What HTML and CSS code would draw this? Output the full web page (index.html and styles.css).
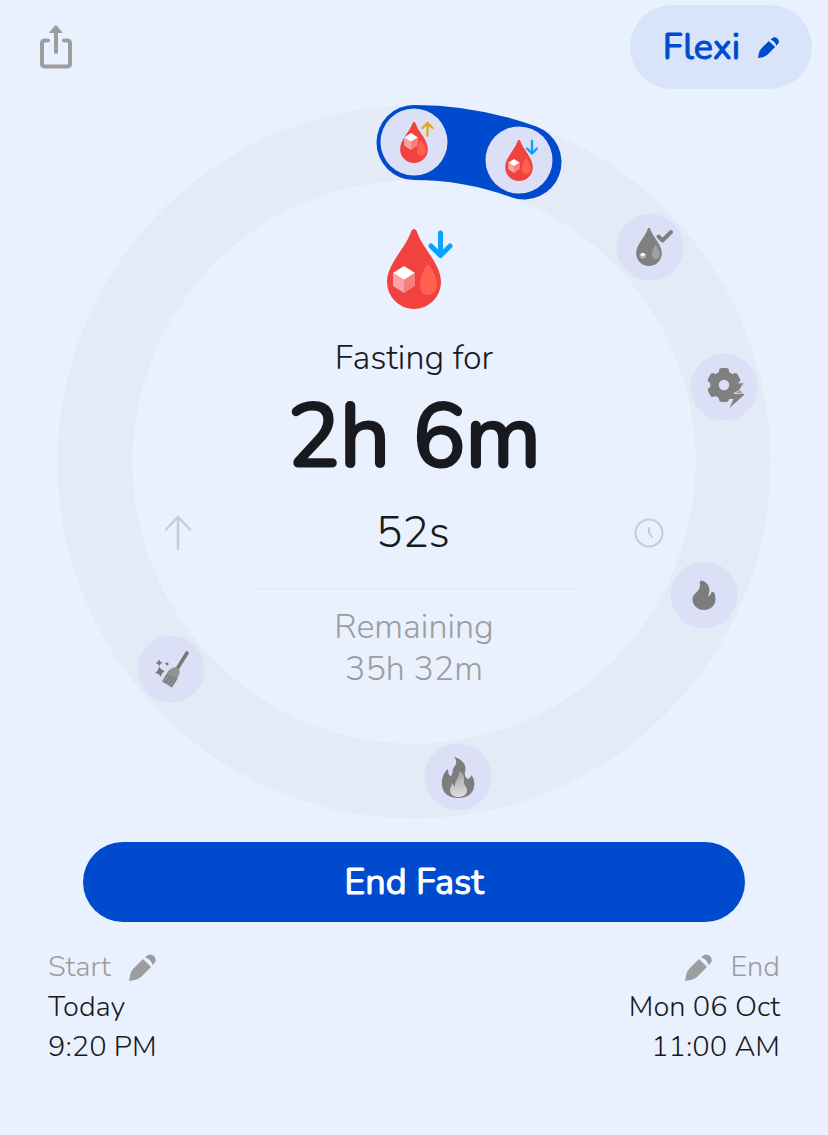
FILE: index.html
```html
<!DOCTYPE html>
<html lang="en">
<head>
<meta charset="utf-8">
<meta name="viewport" content="width=device-width, initial-scale=1">
<title>Fasting timer</title>
<link rel="stylesheet" href="styles.css">
</head>
<body>
<svg class="defs" aria-hidden="true">
  <symbol id="drop" viewBox="0 0 54 80">
    <path fill="var(--drop)" d="M27 0C28.500 0 29.300 1 30 3C36 20 54 35 54 53A27 27 0 0 1 0 53C0 35 18 20 24 3C24.700 1 25.500 0 27 0Z"/>
    <path fill="var(--shine)" d="M41 35C44 38 50 48 50 55C50 62 46 66 41 66C36 66 33 62 33 57C33 49 37 39 41 35Z"/>
  </symbol>
  <symbol id="cube" viewBox="0 0 22 27">
    <path fill="#fff" d="M11 0L22 7L11 14L0 7Z"/>
    <path fill="#f9a3a3" d="M0 7L11 14V27L0 20Z"/>
    <path fill="#f77f7d" d="M22 7L11 14V27L22 20Z"/>
  </symbol>
  <symbol id="pencil" viewBox="0 0 27 27">
    <path fill="currentColor" d="M0 27L1 21.500Q2 17 4.500 14.500L14 5L22 13L12.500 22.500Q9 25.500 6 26Z"/>
    <path fill="currentColor" d="M16 3.500L18.500 1.300Q21.500-.7 25 2Q28 5.500 26 8.500L23.500 11.200Q23 8.500 21 6.300Q18.500 4 16 3.500Z"/>
  </symbol>
</svg>

<main class="screen">
  <header class="topbar">
    <button class="icon-button share" type="button" aria-label="Share">
      <svg width="32" height="44" viewBox="0 0 32 44" fill="none" stroke="currentColor" stroke-width="4" stroke-linecap="round" stroke-linejoin="round">
        <path d="M8 15.500H5Q2 15.500 2 18.500V38.500Q2 41.500 5 41.500H27Q30 41.500 30 38.500V18.500Q30 15.500 27 15.500H24M16 27V6"/>
        <path fill="currentColor" stroke-width="1" d="M16 .5L22 7.500H10Z"/>
      </svg>
    </button>
    <button class="plan" type="button">Flexi <svg width="21" height="21" aria-hidden="true"><use href="#pencil"/></svg></button>
  </header>

  <section class="dial">
    <svg class="ring" viewBox="-357 -357 714 714" aria-hidden="true">
      <circle class="track" r="319"/>
      <path class="progress" d="M0-319.500A319.500 319.500 0 0 1 110-300"/>

      <g transform="translate(0 -320)">
        <circle class="badge on" r="33.500"/>
        <use href="#drop" x="-14" y="-20" width="28" height="41"/>
        <use href="#cube" x="-10" y="-9" width="14" height="17"/>
        <path class="tick up" d="M13.500-6.500V-19M8.500-14L13.500-19L18.500-14"/>
      </g>
      <g transform="translate(105 -302)">
        <circle class="badge on" r="33.500"/>
        <use href="#drop" x="-14" y="-20" width="28" height="41"/>
        <use href="#cube" x="-11" y="-1" width="12" height="14"/>
        <path class="tick down" d="M13-19V-6.500M8-11.500L13-6.500L18-11.500"/>
      </g>
      <g class="muted" transform="translate(236 -215)">
        <circle class="badge" r="33.500"/>
        <use href="#drop" x="-14" y="-19" width="26" height="38"/>
        <path fill="#fff" d="M-7.500 5.500L-4 7.500L-7 9.500L-10.500 8Z"/>
        <path fill="#b5b5b5" d="M-10.500 8L-7 9.500L-4 7.500V10L-7.500 12L-10.500 10Z"/>
        <path class="check" d="M8.500-10.500L12.500-6.500L21-15"/>
      </g>
      <g transform="translate(310 -75)">
        <circle class="badge" r="33.500"/>
        <g transform="translate(0 -2)" fill="#808080">
          <circle r="9.500" fill="none" stroke="#808080" stroke-width="8.500"/>
          <g fill="none" stroke="#808080" stroke-width="5" stroke-linejoin="round">
            <path id="tooth" d="M-3-11L-2.500-14.500H2.500L3-11Z"/>
            <use href="#tooth" transform="rotate(60)"/>
            <use href="#tooth" transform="rotate(120)"/>
            <use href="#tooth" transform="rotate(180)"/>
            <use href="#tooth" transform="rotate(240)"/>
            <use href="#tooth" transform="rotate(300)"/>
          </g>
          <path d="M13-1.500L20.500-2L15.500 5.500L20.500 9.500L5.500 23L9.500 14H4.500L8 6Z"/>
          <path d="M19.500-2L15.500 5.500L10 8.500L20.500 8" fill="none" stroke="#dce0f7" stroke-width="1"/>
        </g>
      </g>
      <g transform="translate(290 133)">
        <circle class="badge" r="33.500"/>
        <path fill="#7c7c7c" d="M-3-14.500C3-14 8-7 4 1C6 1 7-1 7.500-3C10-4 11.500 0 11.500 4C11.500 11 6 15 0 15C-7 15-11.500 10-11.500 4C-11.500-2-5-2-4-9C-3.800-11-5-13-3-14.500Z"/>
      </g>
      <g transform="translate(44 315)">
        <circle class="badge" r="33.500"/>
        <path fill="#7d7d7d" d="M-4-20C5-18 9-11 7-5C6-1 9 2 10 2C12 1 13 0 13-2C16 1 17 5 16 10C15 18 7 21 0 21C-8 21-15 17-16 9C-17 2-14-5-10-8C-10-4-9-1-7-1C-5-3-6-7-4-10C-1-13-1-17-4-20Z"/>
        <path fill="url(#glow)" d="M1-6C7-3 6 1 6 5C6 9 9 9 9 13C9 18 5 20 0 20C-5 20-8 17-8 13C-8 10-6 9-6 6L-3 10C-4 4 2 1 1-6Z"/>
      </g>
      <g transform="translate(-243 207)">
        <circle class="badge" r="33.500"/>
        <path stroke="#777" stroke-width="3.600" stroke-linecap="round" d="M16-16L6 0"/>
        <path fill="#929292" d="M2-1Q4-3 8 0Q10 4 6 9L-4 4Q-2 0 2-1Z"/>
        <path fill="#808080" d="M-4 4L7 9L1 18.500L-9 12.500Z"/>
        <path stroke="#a9a9a9" stroke-width=".7" d="M-2 6L-7 13M1 7L-4 15M4 9L-1 17"/>
        <path fill="#777" d="M-12-3Q-10.500 1-6 2Q-9.500 3.500-10 8Q-12.500 4-16 4Q-12.500 2-12-3Z"/>
        <path fill="#777" d="M-12-9.500Q-11-7-8.500-6.500Q-11-5.500-11.500-3Q-13-5.500-15.500-6Q-12.500-7-12-9.500ZM-4-7.500L-3-5.500L-1.500-5L-3.500-4L-4-2.500L-5-4.500L-6.500-5.500L-4.500-6Z"/>
      </g>
      <defs>
        <linearGradient id="glow" x1="0" y1="0" x2="0" y2="1">
          <stop offset="0" stop-color="#a4a4a4"/>
          <stop offset="1" stop-color="#dedede"/>
        </linearGradient>
      </defs>
    </svg>

    <div class="readout">
      <svg class="stage" width="54" height="80" viewBox="0 0 54 80" aria-hidden="true">
        <use href="#drop" width="54" height="80"/>
        <use href="#cube" x="6" y="37" width="22" height="27"/>
        <path class="tick down large" d="M53.500 4V26M44 17L53.500 26.500L63 17"/>
      </svg>
      <p class="label">Fasting for</p>
      <h1 class="elapsed">2h 6m</h1>
      <div class="seconds-row">
        <button class="icon-button faint" type="button" aria-label="Count up">
          <svg width="28" height="36" viewBox="0 0 28 36" fill="none" stroke="currentColor" stroke-width="2.500" stroke-linecap="round" stroke-linejoin="round"><path d="M14 34V2M2 14.500L14 2L26 14.500"/></svg>
        </button>
        <p class="seconds">52s</p>
        <button class="icon-button faint" type="button" aria-label="History">
          <svg width="30" height="30" viewBox="0 0 30 30" fill="none" stroke="currentColor" stroke-width="2" stroke-linecap="round" stroke-linejoin="round"><circle cx="15" cy="15" r="13.500"/><path d="M15 10V15L18 19"/></svg>
        </button>
      </div>
      <hr class="divider">
      <p class="remaining">Remaining<br>35h 32m</p>
    </div>
  </section>

  <button class="end-fast" type="button">End Fast</button>

  <footer class="times">
    <div class="time">
      <button class="edit" type="button">Start <svg width="27" height="27" aria-hidden="true"><use href="#pencil"/></svg></button>
      <p>Today<br>9:20 PM</p>
    </div>
    <div class="time end">
      <button class="edit" type="button"><svg width="27" height="27" aria-hidden="true"><use href="#pencil"/></svg> End</button>
      <p>Mon 06 Oct<br>11:00 AM</p>
    </div>
  </footer>
</main>
</body>
</html>
```
FILE: styles.css
```css
* {
  box-sizing: border-box;
}

:root {
  --blue: #004acd;
  --ink: #191a20;
  --grey: #9d9d9f;
  --drop: #f2423f;
  --shine: #ff6150;
}

body {
  margin: 0;
  background: #eaf1fe;
  color: var(--ink);
  font-family: Nunito, "Open Sans", sans-serif;
  font-weight: 300;
}

p,
h1 {
  margin: 0;
}

button {
  padding: 0;
  border: 0;
  background: none;
  color: inherit;
  font: inherit;
  cursor: pointer;
}

svg {
  display: block;
}

.defs {
  position: absolute;
  width: 0;
  height: 0;
}

.screen {
  display: flex;
  flex-direction: column;
  align-items: center;
  min-height: 100vh;
  padding-bottom: 48px;
}

.topbar {
  display: flex;
  align-items: center;
  justify-content: space-between;
  align-self: stretch;
  padding: 5px 16px 16px 40px;
}

.share {
  color: #9d9d9d;
}

.plan {
  display: flex;
  align-items: center;
  gap: 18px;
  height: 84px;
  padding: 0 33px;
  border-radius: 42px;
  background: #d8e4fa;
  color: var(--blue);
  font-size: 36px;
  font-weight: 400;
  -webkit-text-stroke: 1px currentColor;
}

.dial {
  display: grid;
  width: 87%;
  max-width: 714px;
}

.ring,
.readout {
  grid-area: 1 / 1;
}

.ring {
  width: 100%;
}

.track {
  fill: none;
  stroke: #e4ebf6;
  stroke-width: 75;
}

.progress {
  fill: none;
  stroke: var(--blue);
  stroke-width: 75;
  stroke-linecap: round;
}

.badge {
  fill: #dce0f7;
}

.muted {
  --drop: #808080;
  --shine: #a0a0a0;
}

.tick,
.check {
  fill: none;
  stroke-width: 2.4px;
  stroke-linecap: round;
  stroke-linejoin: round;
}

.up {
  stroke: #e2a91c;
}

.down {
  stroke: #0aa2fb;
}

.large {
  stroke-width: 5px;
}

.check {
  stroke: #808080;
  stroke-width: 4px;
}

.readout {
  display: flex;
  flex-direction: column;
  align-items: center;
  padding-top: 124px;
  text-align: center;
}

.stage {
  overflow: visible;
}

.label,
.remaining {
  font-size: 34px;
  line-height: 42px;
}

.label {
  margin-top: 28px;
}

.elapsed {
  margin-top: 10px;
  font-size: 88px;
  font-weight: 400;
  line-height: 96px;
  -webkit-text-stroke: 3px currentColor;
}

.seconds-row {
  display: grid;
  grid-template-columns: 28px 1fr 30px;
  align-items: center;
  width: 70%;
  margin-top: 22px;
}

.seconds {
  font-size: 44px;
  line-height: 52px;
}

.faint {
  color: #c6ccd6;
}

.divider {
  width: 324px;
  max-width: 60%;
  height: 2px;
  margin: 29px 0 16px;
  border: 0;
  background: #e4eaf5;
}

.remaining {
  color: var(--grey);
}

.end-fast {
  width: 80%;
  height: 80px;
  margin-top: 23px;
  border-radius: 40px;
  background: var(--blue);
  color: #fff;
  font-size: 36px;
  font-weight: 400;
  -webkit-text-stroke: 1px currentColor;
}

.times {
  display: flex;
  justify-content: space-between;
  align-self: stretch;
  margin-top: 25px;
  padding: 0 48px;
  font-size: 29px;
  line-height: 40px;
}

.time {
  display: flex;
  flex-direction: column;
  align-items: flex-start;
}

.end {
  align-items: flex-end;
  text-align: right;
}

.edit {
  display: flex;
  align-items: center;
  gap: 18px;
  color: var(--grey);
}
```
